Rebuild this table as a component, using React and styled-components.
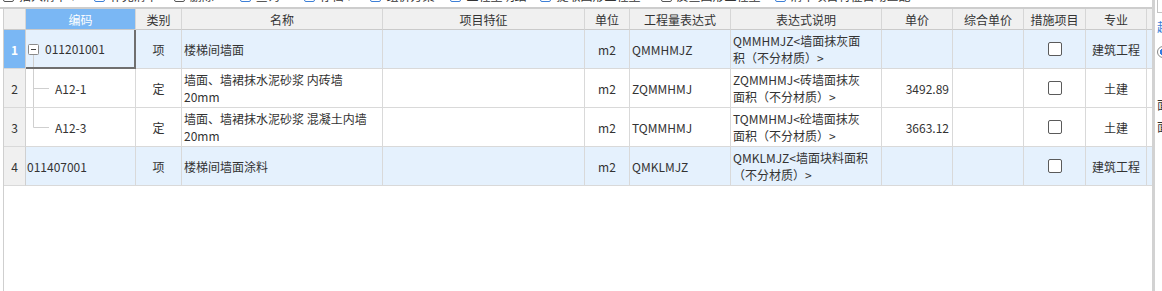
import React from 'react';
import styled, { createGlobalStyle } from 'styled-components';

const GlobalStyle = createGlobalStyle`
html, body {
  margin: 0;
  padding: 0;
  background: #fff;
}
body {
  font-family: "Noto Sans CJK SC", "Microsoft YaHei", sans-serif;
  font-size: 12px;
  color: #333;
}
`;

const Page = styled.div`
display: flex;
height: 100vh;
overflow: hidden;
background: #fff;
`;

const Main = styled.div`
width: 1152px;
flex-shrink: 0;
display: flex;
flex-direction: column;
`;

const Toolbar = styled.div`
height: 7px;
flex-shrink: 0;
overflow: hidden;
display: flex;
align-items: flex-end;
padding-left: 3px;
border-bottom: 2px solid #cdcdcd;
`;

const ToolItem = styled.div`
display: flex;
align-items: center;
gap: 5px;
height: 16px;
line-height: 16px;
margin-bottom: 3px;
margin-right: ${(p) => p.$gap}px;
white-space: nowrap;
color: #333;
`;

const ToolIcon = styled.span`
width: 11px;
height: 11px;
border: 1px solid ${(p) => (p.$blue ? '#3d7fd6' : '#555')};
border-radius: 2px;
box-sizing: border-box;
`;

const GridFrame = styled.div`
flex: 1;
margin-left: 3px;
border-left: 1px solid #cfcfcf;
`;

const Grid = styled.div`
display: grid;
grid-template-columns: 22px 110px 46px 201px 202px 45px 101px 151px 71px 71px 62px 61px 6px;
grid-auto-rows: 39px;
grid-template-rows: 21px;
`;

const HeadCell = styled.div`
box-sizing: border-box;
display: flex;
align-items: center;
justify-content: center;
background: ${(p) => (p.$active ? '#7ab7f4' : '#f0f0f0')};
color: ${(p) => (p.$active ? '#fff' : '#333')};
border-right: ${(p) => (p.$last ? 'none' : '1px solid #d6d6d6')};
border-bottom: 1px solid #cacaca;
white-space: nowrap;
overflow: hidden;
`;

const Cell = styled.div`
box-sizing: border-box;
display: flex;
align-items: center;
justify-content: ${(p) => p.$align || 'flex-start'};
padding: ${(p) => p.$pad || '0 3px'};
background: ${(p) => p.$bg};
border-right: ${(p) => (p.$last ? 'none' : '1px solid #d9d9d9')};
border-bottom: 1px solid #d9d9d9;
line-height: 17px;
overflow: hidden;
white-space: nowrap;
`;

const CodeCell = styled(Cell)`
align-items: stretch;
padding: 0 0 0 1px;
${(p) =>
  p.$selected &&
  `
  border-right: 2px solid #6f6f6f;
  border-bottom: 2px solid #6f6f6f;
`}
`;

const CodeText = styled.span`
align-self: center;
`;

const NumCell = styled(Cell)`
justify-content: center;
padding: 0;
background: ${(p) => (p.$selected ? '#7ab7f4' : '#f0f0f0')};
color: ${(p) => (p.$selected ? '#fff' : '#333')};
font-weight: ${(p) => (p.$selected ? 'bold' : 'normal')};
border-right: 1px solid #d0d0d0;
`;

const Lines = styled.div`
display: flex;
flex-direction: column;
`;

const Check = styled.span`
width: 14px;
height: 14px;
box-sizing: border-box;
border: 1px solid #5a5a5a;
border-radius: 2px;
background: #fff;
`;

const Splitter = styled.div`
width: 3px;
flex-shrink: 0;
background: #d2d2d2;
`;

const SidePanel = styled.div`
flex: 1;
overflow: hidden;
padding-left: 2px;
display: flex;
flex-direction: column;
white-space: nowrap;
`;

const SideTab = styled.div`
height: 12px;
border-left: 1px solid #c4c4c4;
border-bottom: 1px solid #c4c4c4;
`;

const SideText = styled.div`
margin-top: ${(p) => p.$top}px;
color: ${(p) => (p.$blue ? '#3d7fd6' : '#333')};
line-height: 16px;
`;

const Radio = styled.span`
display: block;
margin-top: 11px;
width: 12px;
height: 12px;
box-sizing: border-box;
border-radius: 50%;
border: 1px solid #888;
background: radial-gradient(circle, #2f7be0 0 3px, #fff 3.5px);
`;

const tools = [
  { label: '插入清单 ▾', gap: 18, blue: false },
  { label: '补充清单', gap: 16, blue: true },
  { label: '删除', gap: 26, blue: false },
  { label: '查询', gap: 24, blue: true },
  { label: '存档 ▾', gap: 18, blue: true },
  { label: '组价方案', gap: 16, blue: true },
  { label: '工程量明细', gap: 14, blue: true },
  { label: '提取图形工程量', gap: 20, blue: true },
  { label: '反查图形工程量', gap: 14, blue: false },
  { label: '清单项目特征自动匹配', gap: 10, blue: true },
];

const headers = ['', '编码', '类别', '名称', '项目特征', '单位', '工程量表达式', '表达式说明', '单价', '综合单价', '措施项目', '专业', ''];

const rows = [
  {
    n: 1, code: '011201001', tree: 'root', type: '项', name: ['楼梯间墙面'], unit: 'm2', expr: 'QMMHMJZ',
    desc: ['QMMHMJZ<墙面抹灰面', '积（不分材质）>'], price: '', major: '建筑工程', group: true, selected: true,
  },
  {
    n: 2, code: 'A12-1', tree: 'mid', type: '定', name: ['墙面、墙裙抹水泥砂浆 内砖墙', '20mm'], unit: 'm2', expr: 'ZQMMHMJ',
    desc: ['ZQMMHMJ<砖墙面抹灰', '面积（不分材质）>'], price: '3492.89', major: '土建',
  },
  {
    n: 3, code: 'A12-3', tree: 'last', type: '定', name: ['墙面、墙裙抹水泥砂浆 混凝土内墙', '20mm'], unit: 'm2', expr: 'TQMMHMJ',
    desc: ['TQMMHMJ<砼墙面抹灰', '面积（不分材质）>'], price: '3663.12', major: '土建',
  },
  {
    n: 4, code: '011407001', tree: 'none', type: '项', name: ['楼梯间墙面涂料'], unit: 'm2', expr: 'QMKLMJZ',
    desc: ['QMKLMJZ<墙面块料面积', '（不分材质）>'], price: '', major: '建筑工程', group: true,
  },
];

// tree connectors drawn in front of the code
function TreeMark({ kind }) {
  if (kind === 'root') {
    return (
      <svg width="18" height="38" viewBox="0 0 18 38">
        <rect x="1.5" y="14.5" width="10" height="10" rx="1" fill="#fff" stroke="#8a8a8a" />
        <line x1="4" y1="19.5" x2="9" y2="19.5" stroke="#444" />
        <line x1="6.5" y1="25" x2="6.5" y2="38" stroke="#cfcfcf" />
      </svg>
    );
  }
  if (kind === 'mid' || kind === 'last') {
    return (
      <svg width="28" height="38" viewBox="0 0 28 38">
        <line x1="6.5" y1="0" x2="6.5" y2={kind === 'mid' ? 38 : 19.5} stroke="#cfcfcf" />
        <line x1="6.5" y1="19.5" x2="22" y2="19.5" stroke="#cfcfcf" />
      </svg>
    );
  }
  return null;
}

function App() {
  return (
    <>
      <GlobalStyle />
      <Page>
        <Main>
          <Toolbar>
            {tools.map((t) => (
              <ToolItem key={t.label} $gap={t.gap}>
                <ToolIcon $blue={t.blue} />
                {t.label}
              </ToolItem>
            ))}
          </Toolbar>
          <GridFrame>
            <Grid>
              {headers.map((h, i) => (
                <HeadCell key={i} $active={i === 1} $last={i === headers.length - 1}>{h}</HeadCell>
              ))}
              {rows.map((r) => {
                const bg = r.group ? '#e5f1fd' : '#fff';
                return (
                  <React.Fragment key={r.n}>
                    <NumCell $bg={bg} $selected={r.selected}>{r.n}</NumCell>
                    <CodeCell $bg={bg} $selected={r.selected}>
                      <TreeMark kind={r.tree} />
                      <CodeText>{r.code}</CodeText>
                    </CodeCell>
                    <Cell $bg={bg} $align="center">{r.type}</Cell>
                    <Cell $bg={bg} $pad="0 2px">
                      <Lines>{r.name.map((l) => <span key={l}>{l}</span>)}</Lines>
                    </Cell>
                    <Cell $bg={bg} />
                    <Cell $bg={bg} $align="center">{r.unit}</Cell>
                    <Cell $bg={bg} $pad="0 2px">{r.expr}</Cell>
                    <Cell $bg={bg} $pad="0 2px">
                      <Lines>{r.desc.map((l) => <span key={l}>{l}</span>)}</Lines>
                    </Cell>
                    <Cell $bg={bg} $align="flex-end">{r.price}</Cell>
                    <Cell $bg={bg} />
                    <Cell $bg={bg} $align="center"><Check /></Cell>
                    <Cell $bg={bg} $align="center">{r.major}</Cell>
                    <Cell $bg={bg} $last />
                  </React.Fragment>
                );
              })}
            </Grid>
          </GridFrame>
        </Main>
        <Splitter />
        <SidePanel>
          <SideTab />
          <SideText $top={6} $blue>起始</SideText>
          <Radio />
          <SideText $top={39}>面积</SideText>
          <SideText $top={6}>面层</SideText>
        </SidePanel>
      </Page>
    </>
  );
}

export default App;
